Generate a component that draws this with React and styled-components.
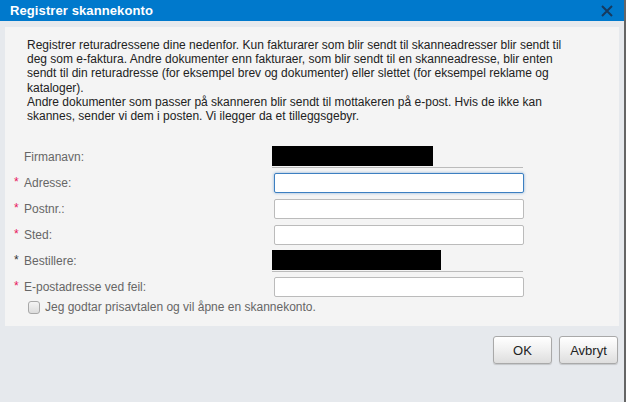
import React, { useState } from 'react';
import styled, { createGlobalStyle } from 'styled-components';

const GlobalStyle = createGlobalStyle`
  html, body {
    margin: 0;
    padding: 0;
    background: #656565;
  }
  body {
    font-family: "Liberation Sans", Arial, sans-serif;
  }
`;

const Dialog = styled.div`
  width: 624px;
  height: 402px;
  background: #e6e9ed;
  display: flex;
  flex-direction: column;
`;

const Header = styled.div`
  height: 21px;
  background: #0079cc;
  display: flex;
  align-items: center;
  justify-content: space-between;
  padding: 0 10px;
`;

const Title = styled.h1`
  margin: 0;
  font-size: 13px;
  font-weight: bold;
  color: #fff;
  letter-spacing: 0.1px;
`;

const CloseButton = styled.button`
  border: none;
  background: transparent;
  padding: 0;
  width: 14px;
  height: 14px;
  display: flex;
  align-items: center;
  justify-content: center;
  cursor: pointer;
`;

const Panel = styled.div`
  margin: 6px 5px 0 5px;
  background: #f4f4f4;
  padding: 11px 47px 12px 22px;
`;

const Intro = styled.p`
  margin: 0;
  font-size: 12px;
  line-height: 14.2px;
  color: #222;
`;

const Form = styled.div`
  margin: 21px 0 0 -3px;
  display: grid;
  grid-template-columns: 248px 252px;
`;

const Label = styled.label`
  height: 26px;
  display: flex;
  align-items: center;
  font-size: 12px;
  color: #666;
  position: relative;
`;

const Star = styled.span`
  position: absolute;
  left: -10px;
  top: 5px;
  font-size: 12px;
  color: ${(p) => (p.$dark ? '#333' : '#e8175d')};
`;

const FieldCell = styled.div`
  height: 26px;
  display: flex;
  align-items: center;
`;

const TextInput = styled.input`
  box-sizing: border-box;
  margin-left: 2px;
  width: 250px;
  height: 20px;
  border: 1px solid ${(p) => (p.$focused ? '#3d7fc1' : '#bbb')};
  border-radius: 2px;
  background: #fff;
  box-shadow: ${(p) => (p.$focused ? '0 0 3px rgba(61,127,193,0.6)' : 'none')};
  outline: none;
  font-size: 12px;
  padding: 0 4px;
`;

const ReadOnly = styled.div`
  box-sizing: border-box;
  width: 251px;
  height: 22px;
  margin-top: -1px;
  border-bottom: 1px solid #bbb;
  display: flex;
  align-items: flex-start;
`;

const Redacted = styled.div`
  width: ${(p) => p.$w}px;
  height: 20px;
  background: #000;
`;

const CheckRow = styled.label`
  display: flex;
  align-items: center;
  gap: 5px;
  margin-left: 1px;
  height: 14px;
  font-size: 12px;
  color: #666;
`;

const CheckBox = styled.span`
  box-sizing: border-box;
  width: 12px;
  height: 13px;
  border: 1px solid #a8a8a8;
  border-radius: 3px;
  background: linear-gradient(#f4f4f4, #dcdcdc);
`;

const Footer = styled.div`
  display: flex;
  justify-content: flex-end;
  gap: 7px;
  padding: 10px 6px 0 0;
`;

const Button = styled.button`
  box-sizing: border-box;
  width: 59px;
  height: 28px;
  border: 1px solid #a9a9a9;
  border-radius: 3px;
  background: linear-gradient(#ffffff 0%, #f0f0f0 50%, #dedede 100%);
  box-shadow: 0 1px 1px rgba(0, 0, 0, 0.15);
  font-family: "Liberation Sans", Arial, sans-serif;
  font-size: 13px;
  color: #222;
  cursor: pointer;
`;

const fields = [
  { label: 'Firmanavn:', kind: 'redacted', w: 161 },
  { label: 'Adresse:', kind: 'input', required: true, focused: true },
  { label: 'Postnr.:', kind: 'input', required: true },
  { label: 'Sted:', kind: 'input', required: true },
  { label: 'Bestillere:', kind: 'redacted', w: 169, required: true, dark: true },
  { label: 'E-postadresse ved feil:', kind: 'input', required: true },
];

const App = () => {
  const [values, setValues] = useState({});

  return (
    <>
      <GlobalStyle />
      <Dialog>
        <Header>
          <Title>Registrer skannekonto</Title>
          <CloseButton aria-label="Lukk">
            <svg width="12" height="12" viewBox="0 0 12 12">
              <path d="M1 1 L11 11 M11 1 L1 11" stroke="#163a5f" strokeWidth="2" />
            </svg>
          </CloseButton>
        </Header>
        <Panel>
          <Intro>
            Registrer returadressene dine nedenfor. Kun fakturarer som blir sendt til skanneadresser blir sendt til
            deg som e-faktura. Andre dokumenter enn fakturaer, som blir sendt til en skanneadresse, blir enten
            sendt til din returadresse (for eksempel brev og dokumenter) eller slettet (for eksempel reklame og
            kataloger).
            <br />
            Andre dokumenter som passer på skanneren blir sendt til mottakeren på e-post. Hvis de ikke kan
            skannes, sender vi dem i posten. Vi ilegger da et tilleggsgebyr.
          </Intro>
          <Form>
            {fields.map((f) => (
              <React.Fragment key={f.label}>
                <Label>
                  {f.required && <Star $dark={f.dark}>*</Star>}
                  {f.label}
                </Label>
                <FieldCell>
                  {f.kind === 'input' ? (
                    <TextInput
                      $focused={f.focused}
                      value={values[f.label] || ''}
                      onChange={(e) => setValues({ ...values, [f.label]: e.target.value })}
                    />
                  ) : (
                    <ReadOnly>
                      <Redacted $w={f.w} />
                    </ReadOnly>
                  )}
                </FieldCell>
              </React.Fragment>
            ))}
          </Form>
          <CheckRow>
            <CheckBox />
            Jeg godtar prisavtalen og vil åpne en skannekonto.
          </CheckRow>
        </Panel>
        <Footer>
          <Button>OK</Button>
          <Button>Avbryt</Button>
        </Footer>
      </Dialog>
    </>
  );
};

export default App;
